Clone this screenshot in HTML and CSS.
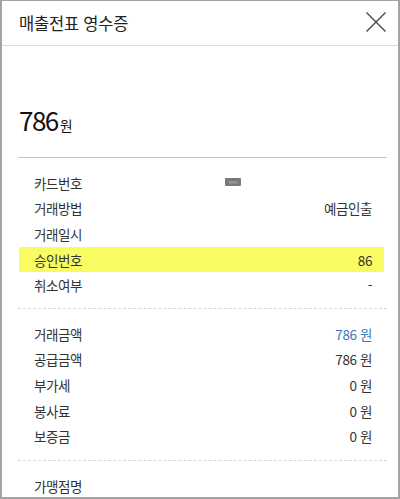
FILE: index.html
```html
<!DOCTYPE html>
<html lang="ko">
<head>
<meta charset="utf-8">
<link rel="stylesheet" href="styles.css">
</head>
<body>
<div class="receipt">
  <header class="head">
    <h1 class="title">매출전표 영수증</h1>
    <svg class="close" width="20" height="20" viewBox="0 0 20 20"><path d="M0.5 0.5L19.5 19.5M19.5 0.5L0.5 19.5" stroke="#444" stroke-width="1.3" fill="none"/></svg>
  </header>
  <div class="total"><span class="num">786</span><span class="won">원</span></div>
  <div class="group first">
    <div class="row start"><span>카드번호</span><span class="mask">####</span></div>
    <div class="row"><span>거래방법</span><span>예금인출</span></div>
    <div class="row"><span>거래일시</span><span></span></div>
    <div class="row hl"><span>승인번호</span><span>86</span></div>
    <div class="row"><span>취소여부</span><span>-</span></div>
  </div>
  <div class="group">
    <div class="row"><span>거래금액</span><span class="blue">786 원</span></div>
    <div class="row"><span>공급금액</span><span>786 원</span></div>
    <div class="row"><span>부가세</span><span>0 원</span></div>
    <div class="row"><span>봉사료</span><span>0 원</span></div>
    <div class="row"><span>보증금</span><span>0 원</span></div>
  </div>
  <div class="group last">
    <div class="row"><span>가맹점명</span><span></span></div>
  </div>
</div>
</body>
</html>
```
FILE: styles.css
```css
* { box-sizing: border-box; }
html, body { margin: 0; padding: 0; background: #fff; }
body { font-family: "Noto Sans CJK KR", "Noto Sans", sans-serif; color: #333; }
.receipt {
  width: 400px;
  height: 499px;
  border: 2px solid #a3a3a3;
  border-top-width: 1px;
  overflow: hidden;
  background: #fff;
}
.head {
  height: 45px;
  display: flex;
  align-items: center;
  justify-content: space-between;
  padding: 0 12px 0 17px;
  border-bottom: 1px solid #dcdcdc;
}
.title { margin: 0; font-size: 16.5px; font-weight: 400; color: #222; letter-spacing: -0.2px; }
.close { margin-top: -2px; }
.total {
  height: 112px;
  margin: 0 11px 0 16px;
  padding: 55px 0 0 1px;
  border-bottom: 1px solid #c4c4c4;
  color: #111;
}
.num { font-size: 26px; letter-spacing: -1.5px; }
.won { font-size: 14px; margin-left: 2px; letter-spacing: -0.5px; }
.group {
  margin: 0 11px 0 16px;
  padding: 12px 0 10px;
  border-bottom: 1px dashed #d6d6d6;
}
.group + .group { padding-top: 12px; padding-bottom: 11px; }
.group.last { border-bottom: none; }
.row {
  height: 25.6px;
  display: flex;
  align-items: center;
  justify-content: space-between;
  padding: 0 12px 0 15px;
  margin: 0 3px 0 1px;
  font-size: 13.5px;
  letter-spacing: -0.4px;
  color: #333;
}
.row.start { justify-content: flex-start; }
.row.hl { background: #f9fb62; }
.mask {
  display: block;
  width: 16px;
  height: 8px;
  background: #7a7a7a;
  color: #bbb;
  font-size: 4px;
  line-height: 8px;
  text-align: center;
  overflow: hidden;
  border-radius: 1px;
  margin-left: 143px;
  margin-top: -2px;
  letter-spacing: 0;
}
.blue { color: #3a79b8; }
```
